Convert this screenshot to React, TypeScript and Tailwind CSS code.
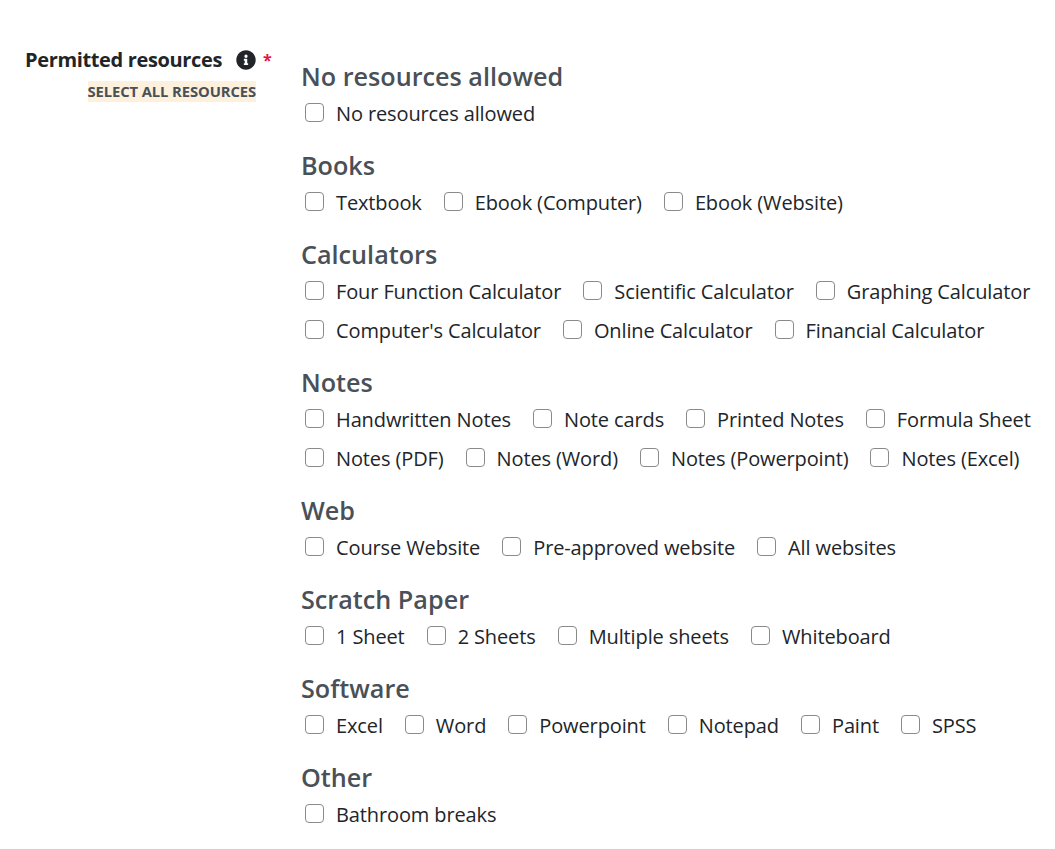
const groups: { title: string; rows: string[][] }[] = [
  { title: "No resources allowed", rows: [["No resources allowed"]] },
  { title: "Books", rows: [["Textbook", "Ebook (Computer)", "Ebook (Website)"]] },
  {
    title: "Calculators",
    rows: [
      ["Four Function Calculator", "Scientific Calculator", "Graphing Calculator"],
      ["Computer's Calculator", "Online Calculator", "Financial Calculator"],
    ],
  },
  {
    title: "Notes",
    rows: [
      ["Handwritten Notes", "Note cards", "Printed Notes", "Formula Sheet"],
      ["Notes (PDF)", "Notes (Word)", "Notes (Powerpoint)", "Notes (Excel)"],
    ],
  },
  { title: "Web", rows: [["Course Website", "Pre-approved website", "All websites"]] },
  { title: "Scratch Paper", rows: [["1 Sheet", "2 Sheets", "Multiple sheets", "Whiteboard"]] },
  { title: "Software", rows: [["Excel", "Word", "Powerpoint", "Notepad", "Paint", "SPSS"]] },
  { title: "Other", rows: [["Bathroom breaks"]] },
];

function Check({ label }: { label: string }) {
  return (
    <label className="flex items-center h-[39px] pl-[4px] mr-[18px] whitespace-nowrap">
      <span className="w-[19px] h-[19px] rounded-[4px] border border-[#8a8a8a] bg-white mr-[12px] mb-[2px]" />
      <span className="text-[20px] leading-[30px] tracking-[-0.12px] text-[#212529]">{label}</span>
    </label>
  );
}

export default function App() {
  return (
    <div className="flex w-[1055px] h-[849px] bg-white font-['Open_Sans','Noto_Sans',sans-serif]">
      <div className="w-[301px] shrink-0 pt-[45px] pl-[25px]">
        <div className="flex items-center h-[30px]">
          <span className="text-[20px] font-bold tracking-[-0.35px] text-[#212529]">Permitted resources</span>
          <svg className="ml-[14px] w-[20px] h-[20px] text-[#212529]" viewBox="0 0 512 512" fill="currentColor">
            <path d="M256 8C119 8 8 119 8 256s111 248 248 248 248-111 248-248S393 8 256 8zm0 110a42 42 0 1 1 0 84 42 42 0 0 1 0-84zm56 254c0 7-5 12-12 12h-88c-7 0-12-5-12-12v-24c0-7 5-12 12-12h12v-64h-12c-7 0-12-5-12-12v-24c0-7 5-12 12-12h64c7 0 12 5 12 12v100h12c7 0 12 5 12 12v24z" />
          </svg>
          <span className="ml-[7px] text-[16px] font-bold text-[#e3173e]">*</span>
        </div>
        <div className="flex justify-end pr-[45px] mt-[6px]">
          <span className="bg-[#fdf1dd] text-[14.8px] leading-[21px] font-bold tracking-[-0.1px] text-[#495057]">SELECT ALL RESOURCES</span>
        </div>
      </div>
      <div className="pt-[59px]">
        {groups.map((g) => (
          <div key={g.title} className="mb-[15px]">
            <h5 className="text-[25.2px] leading-[35px] font-semibold text-[#495057]">{g.title}</h5>
            {g.rows.map((r, i) => (
              <div key={i} className="flex">
                {r.map((l) => (
                  <Check key={l} label={l} />
                ))}
              </div>
            ))}
          </div>
        ))}
      </div>
    </div>
  );
}
